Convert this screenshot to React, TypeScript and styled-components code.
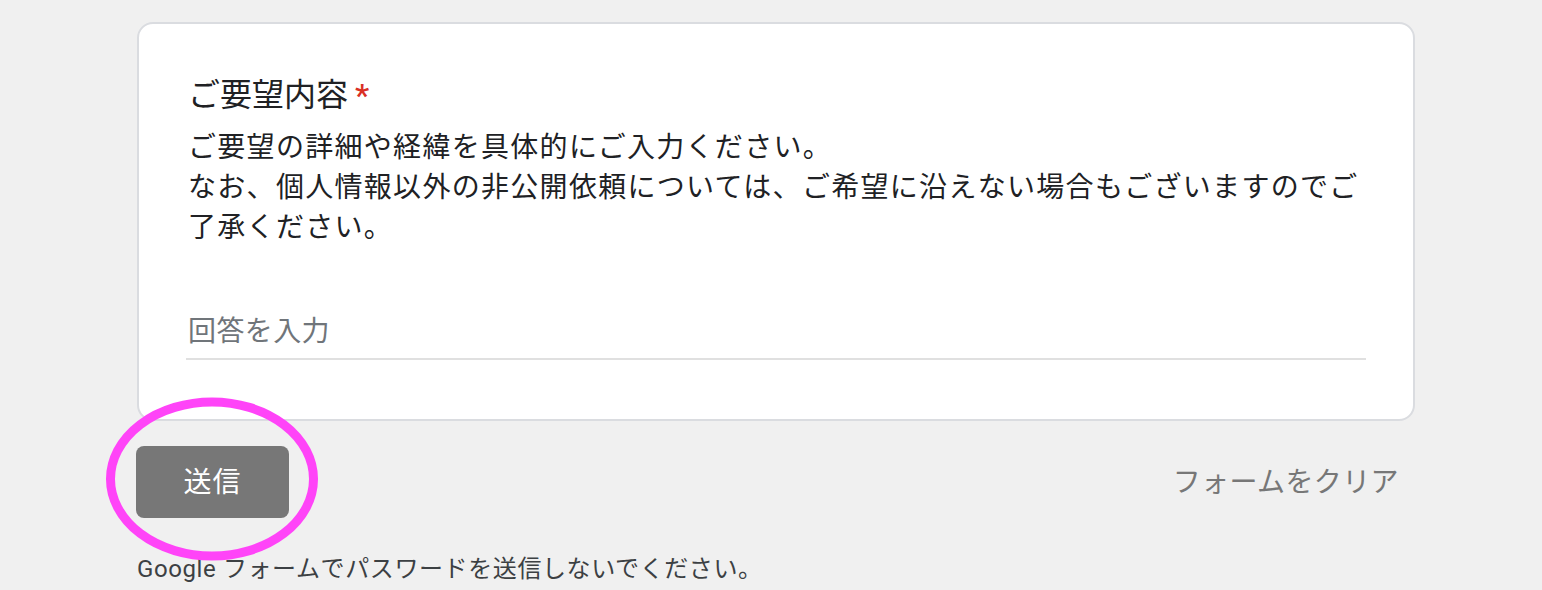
import React from 'react';
import styled, { createGlobalStyle } from 'styled-components';

const GlobalStyle = createGlobalStyle`
  html, body {
    margin: 0;
    padding: 0;
    background: #f0f0f0;
  }
  body {
    font-family: Roboto, "Noto Sans CJK JP", "Noto Sans", sans-serif;
    color: #202124;
    overflow: hidden;
  }
`;

const Page = styled.div`
  width: 1542px;
  height: 590px;
  padding: 22px 0 0 137px;
  box-sizing: border-box;
  background: #f0f0f0;
`;

const Column = styled.div`
  width: 1278px;
  display: flex;
  flex-direction: column;
`;

const Card = styled.section`
  background: #fff;
  border: 2px solid #dadce0;
  border-radius: 16px;
  padding: 47px 47px 62px 49px;
  box-sizing: border-box;
  height: 399px;
  display: flex;
  flex-direction: column;
`;

const QuestionTitle = styled.div`
  font-size: 32px;
  line-height: 48px;
  color: #202124;
  display: flex;
  align-items: baseline;
`;

const Required = styled.span`
  color: #d93025;
  padding-left: 7px;
  font-family: Roboto, sans-serif;
  font-weight: 500;
`;

const Description = styled.div`
  margin-top: 9px;
  font-size: 28px;
  line-height: 40px;
  letter-spacing: 1.3px;
  color: #202124;
`;

const AnswerField = styled.div`
  margin-top: 54px;
  margin-left: -2px;
  padding: 12px 0 8px 2px;
  border-bottom: 2px solid #e0e0e0;
`;

const Placeholder = styled.span`
  font-size: 28px;
  line-height: 36px;
  color: #70757a;
  letter-spacing: 0.4px;
`;

const ActionRow = styled.div`
  margin-top: 25px;
  display: flex;
  align-items: center;
  justify-content: space-between;
`;

const SubmitWrap = styled.div`
  position: relative;
  margin-left: -1px;
`;

const SubmitButton = styled.button`
  width: 153px;
  height: 72px;
  border: none;
  border-radius: 8px;
  background: #777777;
  color: #ffffff;
  font-family: Roboto, "Noto Sans CJK JP", sans-serif;
  font-size: 28px;
  letter-spacing: 1px;
  padding: 0 0 4px;
  cursor: pointer;
`;

const Highlight = styled.svg`
  position: absolute;
  left: -31px;
  top: -49px;
  pointer-events: none;
`;

const ClearButton = styled.button`
  background: none;
  border: none;
  font-family: Roboto, "Noto Sans CJK JP", sans-serif;
  font-size: 28px;
  letter-spacing: 0.4px;
  color: #777777;
  padding: 0 16px 5px 0;
  cursor: pointer;
`;

const Footnote = styled.div`
  margin-top: 35px;
  font-size: 24px;
  line-height: 32px;
  letter-spacing: 0.6px;
  color: #3c4043;
`;

export default function App() {
  return (
    <>
      <GlobalStyle />
      <Page>
        <Column>
          <Card>
            <QuestionTitle>
              ご要望内容<Required>*</Required>
            </QuestionTitle>
            <Description>
              ご要望の詳細や経緯を具体的にご入力ください。
              <br />
              なお、個人情報以外の非公開依頼については、ご希望に沿えない場合もございますのでご了承ください。
            </Description>
            <AnswerField>
              <Placeholder>回答を入力</Placeholder>
            </AnswerField>
          </Card>
          <ActionRow>
            <SubmitWrap>
              <SubmitButton>送信</SubmitButton>
              <Highlight width="214" height="166" viewBox="0 0 214 166">
                <ellipse cx="107" cy="82" rx="101.5" ry="77" fill="none" stroke="#ff44f8" strokeWidth="9" />
              </Highlight>
            </SubmitWrap>
            <ClearButton>フォームをクリア</ClearButton>
          </ActionRow>
          <Footnote>Google フォームでパスワードを送信しないでください。</Footnote>
        </Column>
      </Page>
    </>
  );
}
